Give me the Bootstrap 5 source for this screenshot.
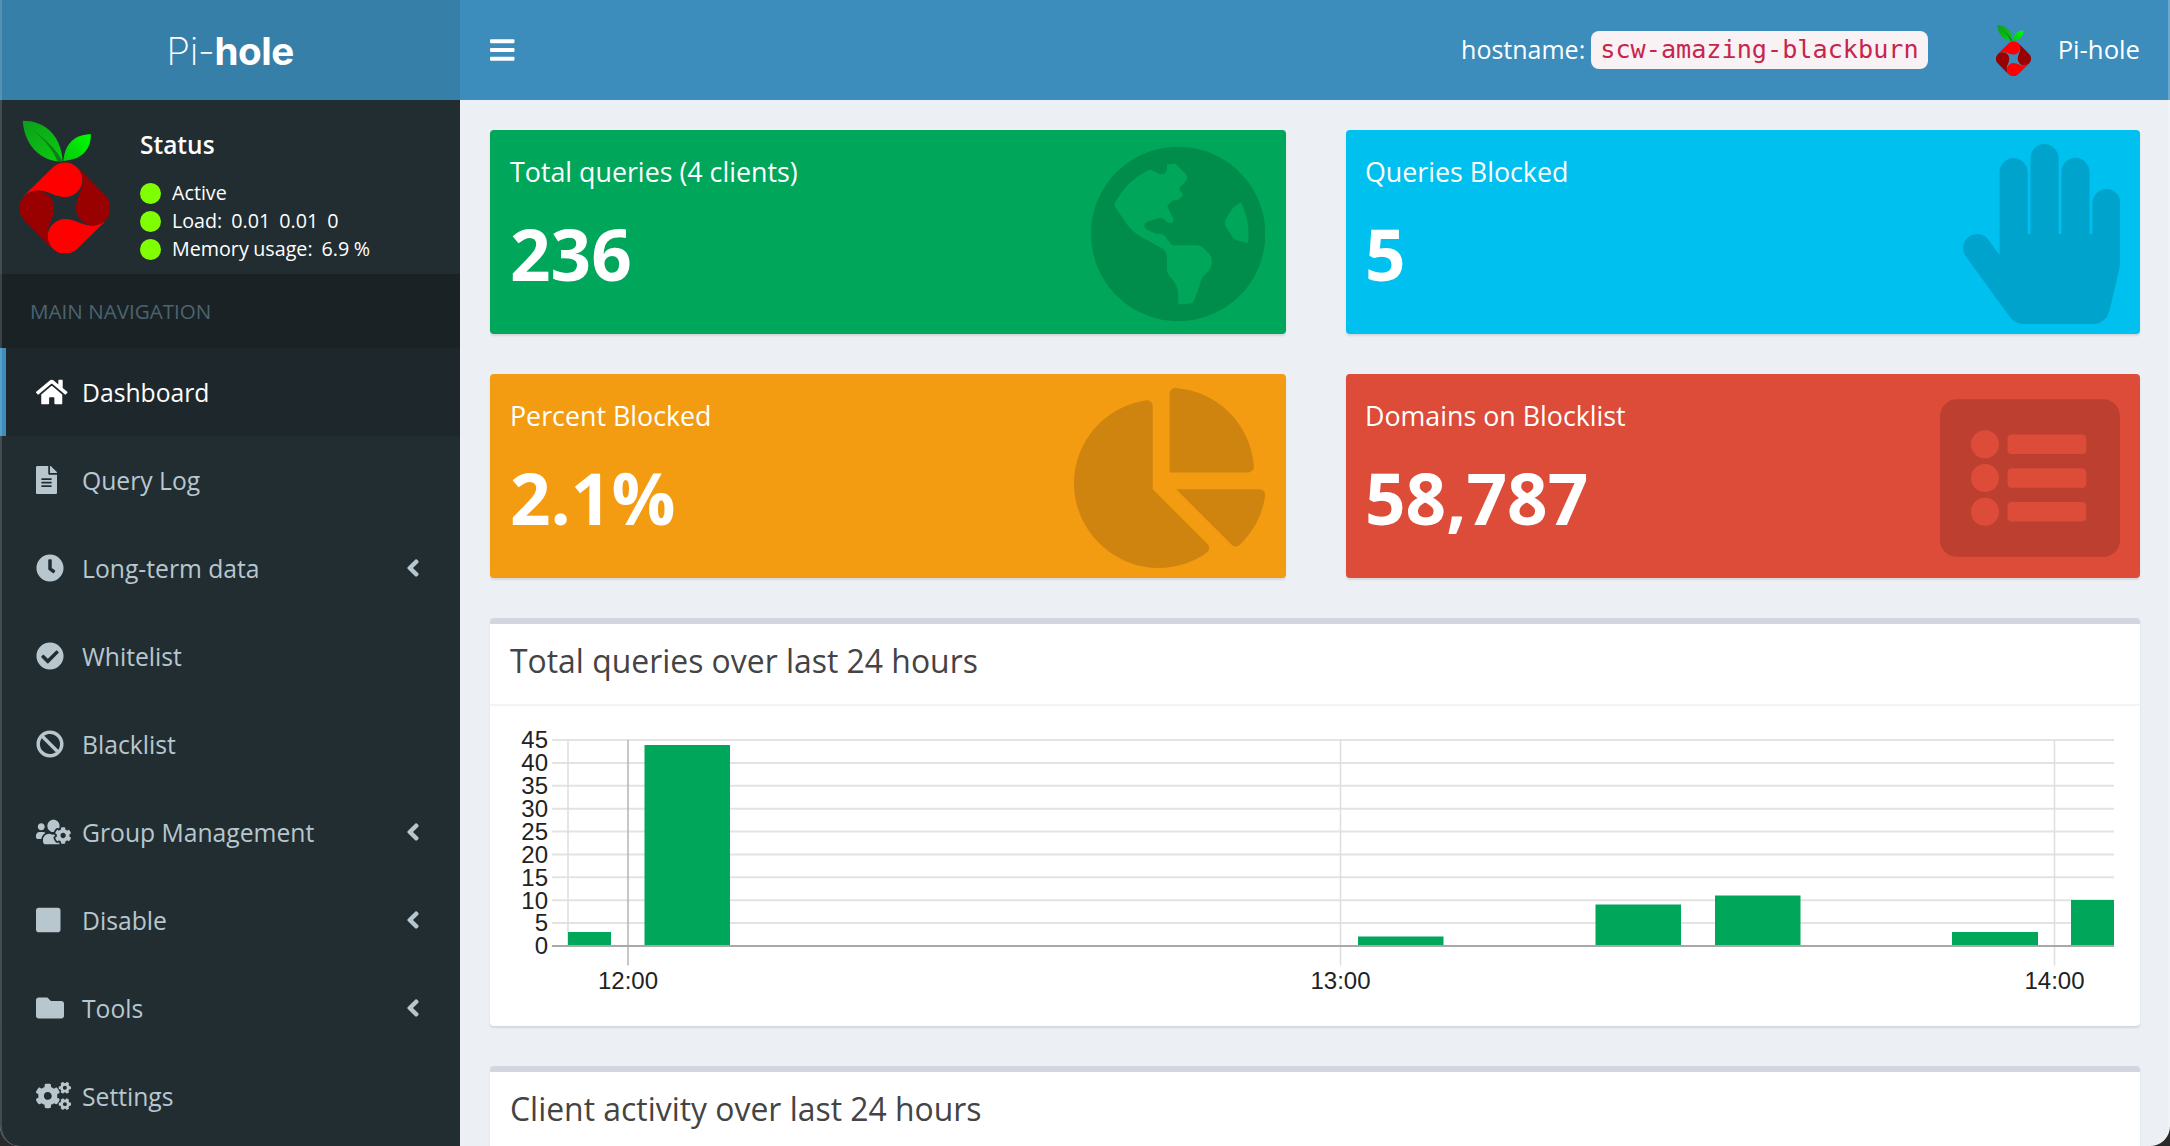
<!DOCTYPE html>
<html lang="en">
<head>
<meta charset="utf-8">
<title>Pi-hole</title>
<link rel="stylesheet" href="https://cdn.jsdelivr.net/npm/bootstrap@5.3.0/dist/css/bootstrap.min.css">
<style>
html,body{height:100%;margin:0;overflow:hidden;background:#2a2a2a}
body{font-family:"Open Sans",sans-serif;font-size:24.7px}
.app-shell{position:relative;width:2170px;height:1146px;overflow:hidden;border-radius:0 0 20px 20px;background:#ecf0f5}
.frame-edge{position:absolute;inset:0;border-left:2px solid rgba(255,255,255,.15);border-right:2px solid rgba(255,255,255,.25);pointer-events:none;border-radius:0 0 20px 20px}
.side-col{width:460px;flex:0 0 460px;background:#222d32;height:1146px}
.brand-bar{height:100px;background:#367fa9;color:#fff;font-family:Inter,"Liberation Sans",sans-serif;font-size:38.6px;letter-spacing:-.5px;padding-top:3px}
.brand-bar .thin{font-weight:200}
.brand-bar .heavy{font-weight:700}
.status-panel{height:174px;padding:20px 0 0 20px;color:#fff}
.berry-big{width:90px;height:133px;flex:none}
.status-info{margin-left:30px}
.status-title{font-size:24.5px;font-weight:600;line-height:28px;margin:11px 0 20px}
.status-row{height:28px;font-size:19.7px;line-height:28px;gap:11px;word-spacing:-.6px}
.status-dot{width:21px;height:21px;border-radius:50%;background:#7fff00;flex:none}
.nav-head{height:74px;background:#1a2226;color:#4b646f;font-size:20.6px;padding-left:30px}
.side-link{height:88px;color:#b8c7ce;border-left:6px solid transparent;padding:0 40px 0 30px;text-decoration:none}
.side-link:hover{color:#fff}
.side-link.is-current{color:#fff;background:#1e282c;border-left-color:#3c8dbc}
.link-text{padding-top:1px}
.ico-slot{width:46px;flex:none}
.side-ico{height:28px;width:auto;fill:currentColor;display:block}
.chev{height:28px;width:auto;fill:currentColor;margin-left:auto}
.top-strip{height:100px;flex:none;background:#3c8dbc;color:#fff;padding:0 30px;font-size:25px}
.top-brand{font-size:25.7px}
.bars-ico{height:28px;width:auto;fill:#fff;display:block}
.host-code{font-family:"DejaVu Sans Mono",monospace;font-size:25.2px;color:#c7254e;background:#f9f2f4;border-radius:8px;padding:0 9px;height:38px;line-height:38px;margin-left:6px;margin-right:68px}
.berry-small{width:35px;height:51px;margin-right:27px;flex:none}
.page-body{padding:30px 30px 0;flex:none}
.tile-row{--bs-gutter-x:60px;--bs-gutter-y:40px;margin-bottom:40px}
.tile-row>.col-6:nth-child(odd){padding-right:29px}
.tile-row>.col-6:nth-child(even){padding-left:31px}
.tile{position:relative;height:204px;border-radius:4px;color:#fff;box-shadow:0 2px 2px rgba(0,0,0,.1);padding:26px 20px 0;overflow:hidden}
.tile-row>.col-6:nth-child(even) .tile{padding-left:19px}
.tile-green{background:#00a65a}
.tile-blue{background:#00c0ef}
.tile-orange{background:#f39c12}
.tile-red{background:#dd4b39}
.tile-label{font-size:26.8px;line-height:32px}
.tile-num{font-size:71px;font-weight:700;line-height:80px;margin-top:26px}
.tile-ico{position:absolute;top:14px;right:20px;height:180px;width:auto;fill:rgba(0,0,0,.15)}
.tile-row>.col-6:nth-child(odd) .tile-ico{right:21px}
.panel-box{background:#fff;border-top:6px solid #d2d6de;border-radius:4px;box-shadow:0 2px 2px rgba(0,0,0,.1);margin-bottom:40px}
.panel-head{height:82px;border-bottom:2px solid #f4f4f4;padding:0 20px 6px;color:#444;font-size:31.9px}
.panel-chart{display:block;width:1650px;height:320px}
.panel-fill{height:200px}
.chart-lbl{font-family:"Liberation Sans",sans-serif;font-size:24px;fill:#222}
.gl{stroke:#e3e3e3;stroke-width:2}
.vl{stroke:#dedede;stroke-width:1.5}
.bar-g{fill:#00a65a}
</style>
</head>
<body>
<svg width="0" height="0" class="position-absolute">
  <defs>
    <linearGradient id="leafA" x1="0" y1="0" x2="1" y2="1"><stop offset="0" stop-color="#0a9f1c"/><stop offset="1" stop-color="#0ecb0e"/></linearGradient>
    <linearGradient id="leafB" x1="0" y1="1" x2="1" y2="0"><stop offset="0" stop-color="#06c40e"/><stop offset="1" stop-color="#00ff00"/></linearGradient>
    <path id="arm" d="M158 203A52 52 0 0 1 247 240A52 52 0 0 1 195 292C165 292 145 272 115 272C95 272 75 282 62 297Z"/>
    <symbol id="berry" viewBox="60 60 270 400">
      <path fill="url(#leafA)" d="M68 62C130 62 182 100 188 184L172 184C115 178 72 130 68 62Z"/>
      <path fill="#0a7f14" d="M100 92C130 115 160 150 172 184L188 184C170 150 135 115 100 92Z"/>
      <path fill="url(#leafB)" d="M190 183C195 130 225 103 273 103C273 150 245 180 190 183Z"/>
      <use href="#arm" fill="#990000" transform="rotate(90 195 325)"/>
      <use href="#arm" fill="#990000" transform="rotate(-90 195 325)"/>
      <use href="#arm" fill="#ff0000"/>
      <use href="#arm" fill="#ff0000" transform="rotate(180 195 325)"/>
    </symbol>
  </defs>
</svg>
<div class="app-shell d-flex">
  <aside class="side-col d-flex flex-column">
    <a class="brand-bar d-flex align-items-center justify-content-center text-decoration-none"><span class="thin">Pi-</span><span class="heavy">hole</span></a>
    <div class="status-panel d-flex">
      <svg class="berry-big"><use href="#berry"/></svg>
      <div class="status-info">
        <div class="status-title">Status</div>
        <div class="status-row d-flex align-items-center"><span class="status-dot"></span><span>Active</span></div>
        <div class="status-row d-flex align-items-center"><span class="status-dot"></span><span>Load:&nbsp;&nbsp;0.01&nbsp;&nbsp;0.01&nbsp;&nbsp;0</span></div>
        <div class="status-row d-flex align-items-center"><span class="status-dot"></span><span>Memory usage:&nbsp;&nbsp;6.9&nbsp;%</span></div>
      </div>
    </div>
    <div class="nav-head d-flex align-items-center">MAIN NAVIGATION</div>
    <nav class="d-flex flex-column">
      <a class="side-link is-current d-flex align-items-center" href="#"><span class="ico-slot"><svg class="side-ico" viewBox="0 0 576 512"><path d="M280.37 148.26L96 300.11V464a16 16 0 0 0 16 16l112.06-.29a16 16 0 0 0 15.92-16V368a16 16 0 0 1 16-16h64a16 16 0 0 1 16 16v95.64a16 16 0 0 0 16 16.05L464 480a16 16 0 0 0 16-16V300L295.67 148.26a12.19 12.19 0 0 0-15.3 0zM571.6 251.47L488 182.56V44.05a12 12 0 0 0-12-12h-56a12 12 0 0 0-12 12v72.61L318.47 43a48 48 0 0 0-61 0L4.34 251.47a12 12 0 0 0-1.6 16.9l25.5 31A12 12 0 0 0 45.15 301l235.22-193.74a12.19 12.19 0 0 1 15.3 0L530.9 301a12 12 0 0 0 16.9-1.6l25.5-31a12 12 0 0 0-1.7-16.93z"/></svg></span><span class="link-text">Dashboard</span></a>
      <a class="side-link d-flex align-items-center" href="#"><span class="ico-slot"><svg class="side-ico" viewBox="0 0 384 512"><path d="M224 136V0H24C10.7 0 0 10.7 0 24v464c0 13.3 10.7 24 24 24h336c13.3 0 24-10.7 24-24V160H248c-13.2 0-24-10.8-24-24zm64 236c0 6.6-5.4 12-12 12H108c-6.6 0-12-5.4-12-12v-8c0-6.6 5.4-12 12-12h168c6.6 0 12 5.4 12 12v8zm0-64c0 6.6-5.4 12-12 12H108c-6.6 0-12-5.4-12-12v-8c0-6.6 5.4-12 12-12h168c6.6 0 12 5.4 12 12v8zm0-72v8c0 6.6-5.4 12-12 12H108c-6.6 0-12-5.4-12-12v-8c0-6.6 5.4-12 12-12h168c6.6 0 12 5.4 12 12zm96-114.1v6.1H256V0h6.1c6.4 0 12.5 2.5 17 7l97.9 98c4.5 4.5 7 10.6 7 16.9z"/></svg></span><span class="link-text">Query Log</span></a>
      <a class="side-link d-flex align-items-center" href="#"><span class="ico-slot"><svg class="side-ico" viewBox="0 0 512 512"><path d="M256,8C119,8,8,119,8,256S119,504,256,504,504,393,504,256,393,8,256,8Zm92.49,313h0l-20,25a16,16,0,0,1-22.49,2.5h0l-67-49.72a40,40,0,0,1-15-31.23V112a16,16,0,0,1,16-16h32a16,16,0,0,1,16,16V256l58,42.5A16,16,0,0,1,348.49,321Z"/></svg></span><span class="link-text">Long-term data</span><svg class="chev" viewBox="0 0 256 512"><path d="M31.7 239l136-136c9.4-9.4 24.6-9.4 33.9 0l22.6 22.6c9.4 9.4 9.4 24.6 0 33.9L127.9 256l96.4 96.4c9.4 9.4 9.4 24.6 0 33.9L201.7 409c-9.4 9.4-24.6 9.4-33.9 0l-136-136c-9.5-9.4-9.5-24.6-.1-34z"/></svg></a>
      <a class="side-link d-flex align-items-center" href="#"><span class="ico-slot"><svg class="side-ico" viewBox="0 0 512 512"><path d="M504 256c0 136.967-111.033 248-248 248S8 392.967 8 256 119.033 8 256 8s248 111.033 248 248zM227.314 387.314l184-184c6.248-6.248 6.248-16.379 0-22.627l-22.627-22.627c-6.248-6.249-16.379-6.249-22.628 0L216 308.118l-70.059-70.059c-6.248-6.248-16.379-6.248-22.628 0l-22.627 22.627c-6.248 6.248-6.248 16.379 0 22.627l104 104c6.249 6.249 16.379 6.249 22.628.001z"/></svg></span><span class="link-text">Whitelist</span></a>
      <a class="side-link d-flex align-items-center" href="#"><span class="ico-slot"><svg class="side-ico" viewBox="0 0 512 512"><path d="M256 8C119.034 8 8 119.033 8 256s111.034 248 248 248 248-111.034 248-248S392.967 8 256 8zm130.108 117.892c65.448 65.448 70 165.481 20.677 235.637L150.47 105.216c70.204-49.356 170.226-44.735 235.638 20.676zM125.892 386.108c-65.448-65.448-70-165.481-20.677-235.637L361.53 406.784c-70.203 49.356-170.226 44.736-235.638-20.676z"/></svg></span><span class="link-text">Blacklist</span></a>
      <a class="side-link d-flex align-items-center" href="#"><span class="ico-slot"><svg class="side-ico" viewBox="0 0 640 512"><path d="M610.5 341.3c2.6-14.1 2.6-28.5 0-42.6l25.8-14.9c3-1.7 4.3-5.2 3.3-8.5-6.7-21.6-18.2-41.2-33.2-57.4-2.3-2.5-6-3.1-9-1.4l-25.8 14.9c-10.9-9.3-23.4-16.5-36.9-21.3v-29.8c0-3.4-2.4-6.4-5.7-7.1-22.3-5-45-4.8-66.2 0-3.3.7-5.7 3.7-5.7 7.1v29.8c-13.5 4.8-26 12-36.9 21.3l-25.8-14.9c-2.9-1.7-6.7-1.1-9 1.4-15 16.2-26.5 35.8-33.2 57.4-1 3.3.4 6.8 3.3 8.5l25.8 14.9c-2.6 14.1-2.6 28.5 0 42.6l-25.8 14.9c-3 1.7-4.3 5.2-3.3 8.5 6.7 21.6 18.2 41.1 33.2 57.4 2.3 2.5 6 3.1 9 1.4l25.8-14.9c10.9 9.3 23.4 16.5 36.9 21.3v29.8c0 3.4 2.4 6.4 5.7 7.1 22.3 5 45 4.8 66.2 0 3.3-.7 5.7-3.7 5.7-7.1v-29.8c13.5-4.8 26-12 36.9-21.3l25.8 14.9c2.9 1.7 6.7 1.1 9-1.4 15-16.2 26.5-35.8 33.2-57.4 1-3.3-.4-6.8-3.3-8.5l-25.8-14.9zM496 368.5c-26.8 0-48.5-21.8-48.5-48.5s21.8-48.5 48.5-48.5 48.5 21.8 48.5 48.5-21.7 48.5-48.5 48.5zM96 224c35.3 0 64-28.7 64-64s-28.7-64-64-64-64 28.7-64 64 28.7 64 64 64zm224 32c1.9 0 3.7-.5 5.6-.6 8.3-21.7 20.5-42.1 36.3-59.2 7.4-8 17.9-12.6 28.9-12.6 6.9 0 13.7 1.8 19.6 5.3l7.9 4.6c.8-.5 1.6-.9 2.4-1.4 7-14.6 11.2-30.8 11.2-48 0-61.9-50.1-112-112-112S208 82.1 208 144c0 61.9 50.1 112 112 112zm105.2 194.5c-2.3-1.2-4.6-2.6-6.8-3.9-8.2 4.8-15.3 9.8-27.5 9.8-10.9 0-21.4-4.6-28.9-12.6-18.3-19.8-32.3-43.9-40.2-69.6-10.7-34.5 24.9-49.7 25.8-50.3-.1-2.6-.1-5.2 0-7.8l-7.9-4.6c-3.8-2.2-7-5-9.8-8.1-3.3.2-6.5.6-9.8.6-24.6 0-47.6-6-68.5-16h-8.3C179.6 288 128 339.6 128 403.2V432c0 26.5 21.5 48 48 48h255.4c-3.7-6-6.2-12.8-6.2-20.3v-9.2zM173.1 274.6C161.5 263.1 145.6 256 128 256H64c-35.3 0-64 28.7-64 64v32c0 17.7 14.3 32 32 32h65.9c6.3-47.4 34.9-87.3 75.2-109.4z"/></svg></span><span class="link-text">Group Management</span><svg class="chev" viewBox="0 0 256 512"><path d="M31.7 239l136-136c9.4-9.4 24.6-9.4 33.9 0l22.6 22.6c9.4 9.4 9.4 24.6 0 33.9L127.9 256l96.4 96.4c9.4 9.4 9.4 24.6 0 33.9L201.7 409c-9.4 9.4-24.6 9.4-33.9 0l-136-136c-9.5-9.4-9.5-24.6-.1-34z"/></svg></a>
      <a class="side-link d-flex align-items-center" href="#"><span class="ico-slot"><svg class="side-ico" viewBox="0 0 448 512"><path d="M400 32H48C21.5 32 0 53.5 0 80v352c0 26.5 21.5 48 48 48h352c26.5 0 48-21.5 48-48V80c0-26.5-21.5-48-48-48z"/></svg></span><span class="link-text">Disable</span><svg class="chev" viewBox="0 0 256 512"><path d="M31.7 239l136-136c9.4-9.4 24.6-9.4 33.9 0l22.6 22.6c9.4 9.4 9.4 24.6 0 33.9L127.9 256l96.4 96.4c9.4 9.4 9.4 24.6 0 33.9L201.7 409c-9.4 9.4-24.6 9.4-33.9 0l-136-136c-9.5-9.4-9.5-24.6-.1-34z"/></svg></a>
      <a class="side-link d-flex align-items-center" href="#"><span class="ico-slot"><svg class="side-ico" viewBox="0 0 512 512"><path d="M464 128H272l-64-64H48C21.49 64 0 85.49 0 112v288c0 26.51 21.49 48 48 48h416c26.51 0 48-21.49 48-48V176c0-26.51-21.49-48-48-48z"/></svg></span><span class="link-text">Tools</span><svg class="chev" viewBox="0 0 256 512"><path d="M31.7 239l136-136c9.4-9.4 24.6-9.4 33.9 0l22.6 22.6c9.4 9.4 9.4 24.6 0 33.9L127.9 256l96.4 96.4c9.4 9.4 9.4 24.6 0 33.9L201.7 409c-9.4 9.4-24.6 9.4-33.9 0l-136-136c-9.5-9.4-9.5-24.6-.1-34z"/></svg></a>
      <a class="side-link d-flex align-items-center" href="#"><span class="ico-slot"><svg class="side-ico" viewBox="0 0 640 512"><path d="M512.1 191l-8.2 14.3c-3 5.3-9.4 7.5-15.1 5.4-11.8-4.4-22.6-10.7-32.1-18.6-4.6-3.8-5.8-10.5-2.8-15.7l8.2-14.3c-6.9-8-12.3-17.3-15.9-27.4h-16.5c-6 0-11.2-4.3-12.2-10.3-2-12-2.1-24.6 0-37.1 1-6 6.2-10.4 12.2-10.4h16.5c3.6-10.1 9-19.4 15.9-27.4l-8.2-14.3c-3-5.2-1.9-11.9 2.8-15.7 9.5-7.9 20.4-14.2 32.1-18.6 5.7-2.1 12.1.1 15.1 5.4l8.2 14.3c10.5-1.9 21.2-1.9 31.7 0L552 6.3c3-5.3 9.4-7.5 15.1-5.4 11.8 4.4 22.6 10.7 32.1 18.6 4.6 3.8 5.8 10.5 2.8 15.7l-8.2 14.3c6.9 8 12.3 17.3 15.9 27.4h16.5c6 0 11.2 4.3 12.2 10.3 2 12 2.1 24.6 0 37.1-1 6-6.2 10.4-12.2 10.4h-16.5c-3.6 10.1-9 19.4-15.9 27.4l8.2 14.3c3 5.2 1.9 11.9-2.8 15.7-9.5 7.9-20.4 14.2-32.1 18.6-5.7 2.1-12.1-.1-15.1-5.4l-8.2-14.3c-10.4 1.9-21.2 1.9-31.7 0zm-10.5-58.8c38.5 29.6 82.4-14.3 52.8-52.8-38.5-29.7-82.4 14.3-52.8 52.8zM386.3 286.1l33.7 16.8c10.1 5.8 14.5 18.1 10.5 29.1-8.9 24.2-26.4 46.4-42.6 65.8-7.4 8.9-20.2 11.1-30.3 5.3l-29.1-16.8c-16 13.7-34.6 24.6-54.9 31.7v33.6c0 11.6-8.3 21.6-19.7 23.6-24.6 4.2-50.4 4.4-75.9 0-11.5-2-20-11.9-20-23.6V418c-20.3-7.2-38.9-18-54.9-31.7L74 403c-10 5.8-22.9 3.6-30.3-5.3-16.2-19.4-33.3-41.6-42.2-65.7-4-10.9.4-23.2 10.5-29.1l33.3-16.8c-3.9-20.9-3.9-42.4 0-63.4L12 205.8c-10.1-5.8-14.6-18.1-10.5-29 8.9-24.2 26-46.4 42.2-65.8 7.4-8.9 20.2-11.1 30.3-5.3l29.1 16.8c16-13.7 34.6-24.6 54.9-31.7V57.1c0-11.5 8.2-21.5 19.6-23.5 24.6-4.2 50.5-4.4 76-.1 11.5 2 20 11.9 20 23.6v33.6c20.3 7.2 38.9 18 54.9 31.7l29.1-16.8c10-5.8 22.9-3.6 30.3 5.3 16.2 19.4 33.2 41.6 42.1 65.8 4 10.9.1 23.2-10 29.1l-33.7 16.8c3.9 21 3.9 42.5 0 63.5zm-117.6 21.1c59.2-77-28.7-164.9-105.7-105.7-59.2 77 28.7 164.9 105.7 105.7zm243.4 182.7l-8.2 14.3c-3 5.3-9.4 7.5-15.1 5.4-11.8-4.4-22.6-10.7-32.1-18.6-4.6-3.8-5.8-10.5-2.8-15.7l8.2-14.3c-6.9-8-12.3-17.3-15.9-27.4h-16.5c-6 0-11.2-4.3-12.2-10.3-2-12-2.1-24.6 0-37.1 1-6 6.2-10.4 12.2-10.4h16.5c3.6-10.1 9-19.4 15.9-27.4l-8.2-14.3c-3-5.2-1.9-11.9 2.8-15.7 9.5-7.9 20.4-14.2 32.1-18.6 5.7-2.1 12.1.1 15.1 5.4l8.2 14.3c10.5-1.9 21.2-1.9 31.7 0l8.2-14.3c3-5.3 9.4-7.5 15.1-5.4 11.8 4.4 22.6 10.7 32.1 18.6 4.6 3.8 5.8 10.5 2.8 15.7l-8.2 14.3c6.9 8 12.3 17.3 15.9 27.4h16.5c6 0 11.2 4.3 12.2 10.3 2 12 2.1 24.6 0 37.1-1 6-6.2 10.4-12.2 10.4h-16.5c-3.6 10.1-9 19.4-15.9 27.4l8.2 14.3c3 5.2 1.9 11.9-2.8 15.7-9.5 7.9-20.4 14.2-32.1 18.6-5.7 2.1-12.1-.1-15.1-5.4l-8.2-14.3c-10.4 1.9-21.2 1.9-31.7 0zM501.6 431c38.5 29.6 82.4-14.3 52.8-52.8-38.5-29.6-82.4 14.3-52.8 52.8z"/></svg></span><span class="link-text">Settings</span></a>
    </nav>
  </aside>
  <main class="flex-grow-1 d-flex flex-column">
    <header class="top-strip d-flex align-items-center">
      <svg class="bars-ico" viewBox="0 0 448 512"><path d="M16 132h416c8.837 0 16-7.163 16-16V76c0-8.837-7.163-16-16-16H16C7.163 60 0 67.163 0 76v40c0 8.837 7.163 16 16 16zm0 160h416c8.837 0 16-7.163 16-16v-40c0-8.837-7.163-16-16-16H16c-8.837 0-16 7.163-16 16v40c0 8.837 7.163 16 16 16zm0 160h416c8.837 0 16-7.163 16-16v-40c0-8.837-7.163-16-16-16H16c-8.837 0-16 7.163-16 16v40c0 8.837 7.163 16 16 16z"/></svg>
      <div class="ms-auto d-flex align-items-center">
        <span>hostname:</span><code class="host-code">scw-amazing-blackburn</code>
        <svg class="berry-small"><use href="#berry"/></svg>
        <span class="top-brand">Pi-hole</span>
      </div>
    </header>
    <div class="page-body">
      <div class="row tile-row">
        <div class="col-6"><div class="tile tile-green">
          <div class="tile-label">Total queries (4 clients)</div><div class="tile-num">236</div>
          <svg class="tile-ico" viewBox="0 0 496 512"><path d="M248 8C111.03 8 0 119.03 0 256s111.03 248 248 248 248-111.03 248-248S384.97 8 248 8zm82.29 357.6c-3.9 3.88-7.99 7.95-11.31 11.28-2.99 3-5.1 6.7-6.17 10.71-1.51 5.66-2.73 11.38-4.77 16.87l-17.39 46.85c-13.76 3-28 4.69-42.65 4.69v-27.38c1.69-12.62-7.64-36.26-22.63-51.25-6-6-9.37-14.14-9.37-22.63v-32.01c0-11.64-6.27-22.34-16.46-27.97-14.37-7.95-34.81-19.06-48.81-26.11-11.48-5.78-22.1-13.14-31.65-21.75l-.8-.72a114.792 114.792 0 0 1-18.06-20.74c-9.38-13.77-24.66-36.42-34.59-51.14 20.47-45.5 57.36-82.04 103.2-101.89l24.01 12.01C203.48 89.74 216 82.01 216 70.11v-11.3c7.99-1.29 16.12-2.11 24.39-2.42l28.3 28.3c6.25 6.25 6.25 16.38 0 22.63L264 112l-10.34 10.34c-3.12 3.12-3.12 8.19 0 11.31l4.69 4.69c3.12 3.12 3.12 8.19 0 11.31l-8 8a8.008 8.008 0 0 1-5.66 2.34h-8.99c-2.08 0-4.08.81-5.58 2.27l-9.92 9.65a8.008 8.008 0 0 0-1.58 9.31l15.59 31.19c2.66 5.32-1.21 11.58-7.15 11.58h-5.64c-1.93 0-3.79-.7-5.24-1.96l-9.28-8.06a16.017 16.017 0 0 0-15.55-3.1l-31.17 10.39a11.95 11.95 0 0 0-8.17 11.34c0 4.53 2.56 8.66 6.61 10.69l11.08 5.54c9.41 4.71 19.79 7.16 30.31 7.16s22.59 27.29 32 32h66.75c8.49 0 16.62 3.37 22.63 9.37l13.69 13.69a30.503 30.503 0 0 1 8.93 21.57 46.536 46.536 0 0 1-13.72 32.98zM417 274.25c-5.79-1.45-10.84-5-14.15-9.97l-17.98-26.97a23.97 23.97 0 0 1 0-26.62l19.59-29.38c2.32-3.47 5.5-6.29 9.24-8.15l12.98-6.49C440.2 193.59 448 223.87 448 256c0 8.67-.74 17.16-1.82 25.54L417 274.25z"/></svg>
        </div></div>
        <div class="col-6"><div class="tile tile-blue">
          <div class="tile-label">Queries Blocked</div><div class="tile-num">5</div>
          <svg class="tile-ico" viewBox="0 0 448 512"><path d="M408.781 128.007C386.356 127.578 368 146.36 368 168.79V256h-8V79.79c0-22.43-18.356-41.212-40.781-40.783C297.488 39.423 280 57.169 280 79v177h-8V40.79C272 18.36 253.644-.422 231.219.007 209.488.423 192 18.169 192 40v216h-8V80.79c0-22.43-18.356-41.212-40.781-40.783C121.488 40.423 104 58.169 104 80v235.992l-31.648-43.519c-12.993-17.866-38.009-21.817-55.877-8.823-17.865 12.994-21.815 38.01-8.822 55.877l125.601 172.705A48 48 0 0 0 172.073 512h197.59c22.274 0 41.622-15.324 46.724-37.006l26.508-112.66a192.011 192.011 0 0 0 5.104-43.975V168c.001-22.06-17.889-40.412-39.218-39.993z"/></svg>
        </div></div>
        <div class="col-6"><div class="tile tile-orange">
          <div class="tile-label">Percent Blocked</div><div class="tile-num">2.1%</div>
          <svg class="tile-ico" viewBox="0 0 544 512"><path d="M527.79 288H290.5l158.03 158.03c6.04 6.04 15.98 6.53 22.19.68 38.7-36.46 65.32-85.61 73.13-140.86 1.34-9.46-6.51-17.85-16.06-17.85zm-15.83-64.8C503.72 103.74 408.26 8.28 288.8.04 279.68-.59 272 7.1 272 16.24V240h223.77c9.14 0 16.82-7.68 16.19-16.8zM224 288V50.71c0-9.55-8.39-17.4-17.84-16.06C86.99 51.49-4.1 155.6.14 280.37 4.5 408.51 114.83 513.59 243.03 511.98c50.4-.63 96.97-16.87 135.26-44.03 7.9-5.6 8.42-17.23 1.57-24.08L224 288z"/></svg>
        </div></div>
        <div class="col-6"><div class="tile tile-red">
          <div class="tile-label">Domains on Blocklist</div><div class="tile-num">58,787</div>
          <svg class="tile-ico" viewBox="0 0 512 512"><path d="M464 480H48c-26.51 0-48-21.49-48-48V80c0-26.51 21.49-48 48-48h416c26.51 0 48 21.49 48 48v352c0 26.51-21.49 48-48 48zM128 120c-22.091 0-40 17.909-40 40s17.909 40 40 40 40-17.909 40-40-17.909-40-40-40zm0 96c-22.091 0-40 17.909-40 40s17.909 40 40 40 40-17.909 40-40-17.909-40-40-40zm0 96c-22.091 0-40 17.909-40 40s17.909 40 40 40 40-17.909 40-40-17.909-40-40-40zm288-136v-32c0-6.627-5.373-12-12-12H204c-6.627 0-12 5.373-12 12v32c0 6.627 5.373 12 12 12h200c6.627 0 12-5.373 12-12zm0 96v-32c0-6.627-5.373-12-12-12H204c-6.627 0-12 5.373-12 12v32c0 6.627 5.373 12 12 12h200c6.627 0 12-5.373 12-12zm0 96v-32c0-6.627-5.373-12-12-12H204c-6.627 0-12 5.373-12 12v32c0 6.627 5.373 12 12 12h200c6.627 0 12-5.373 12-12z"/></svg>
        </div></div>
      </div>
      <section class="panel-box">
        <div class="panel-head d-flex align-items-center">Total queries over last 24 hours</div>
        <svg class="panel-chart" viewBox="490 706 1650 320">
          <g class="gl">
            <path d="M552 740H2114M552 762.9H2114M552 785.8H2114M552 808.7H2114M552 831.6H2114M552 854.4H2114M552 877.3H2114M552 900.2H2114M552 923.1H2114"/>
          </g>
          <path class="vl" d="M568 740V946M1340.5 740V965.5M2054.5 740V965.5"/>
          <path d="M628 740V965.5" stroke="#b5b5b5" stroke-width="1.5"/>
          <g class="bar-g">
            <rect x="568" y="932" width="43" height="14"/>
            <rect x="644.5" y="745" width="85.5" height="201"/>
            <rect x="1358" y="936.5" width="85.5" height="9.5"/>
            <rect x="1595.5" y="904.5" width="85.5" height="41.5"/>
            <rect x="1715" y="895.5" width="85.5" height="50.5"/>
            <rect x="1952" y="932" width="86" height="14"/>
            <rect x="2071" y="900" width="43" height="46"/>
          </g>
          <path d="M552 946H2114" stroke="#a8a8a8" stroke-width="2"/>
          <g class="chart-lbl" text-anchor="end">
            <text x="548" y="748">45</text><text x="548" y="771">40</text><text x="548" y="794">35</text><text x="548" y="817">30</text><text x="548" y="840">25</text><text x="548" y="862.5">20</text><text x="548" y="885.5">15</text><text x="548" y="908.5">10</text><text x="548" y="931">5</text><text x="548" y="954">0</text>
          </g>
          <g class="chart-lbl" text-anchor="middle">
            <text x="628" y="989">12:00</text><text x="1340.5" y="989">13:00</text><text x="2054.5" y="989">14:00</text>
          </g>
        </svg>
      </section>
      <section class="panel-box">
        <div class="panel-head d-flex align-items-center">Client activity over last 24 hours</div>
        <div class="panel-fill"></div>
      </section>
    </div>
  </main>
  <div class="frame-edge"></div>
</div>
<script src="https://cdn.jsdelivr.net/npm/bootstrap@5.3.0/dist/js/bootstrap.bundle.min.js"></script>
</body>
</html>
